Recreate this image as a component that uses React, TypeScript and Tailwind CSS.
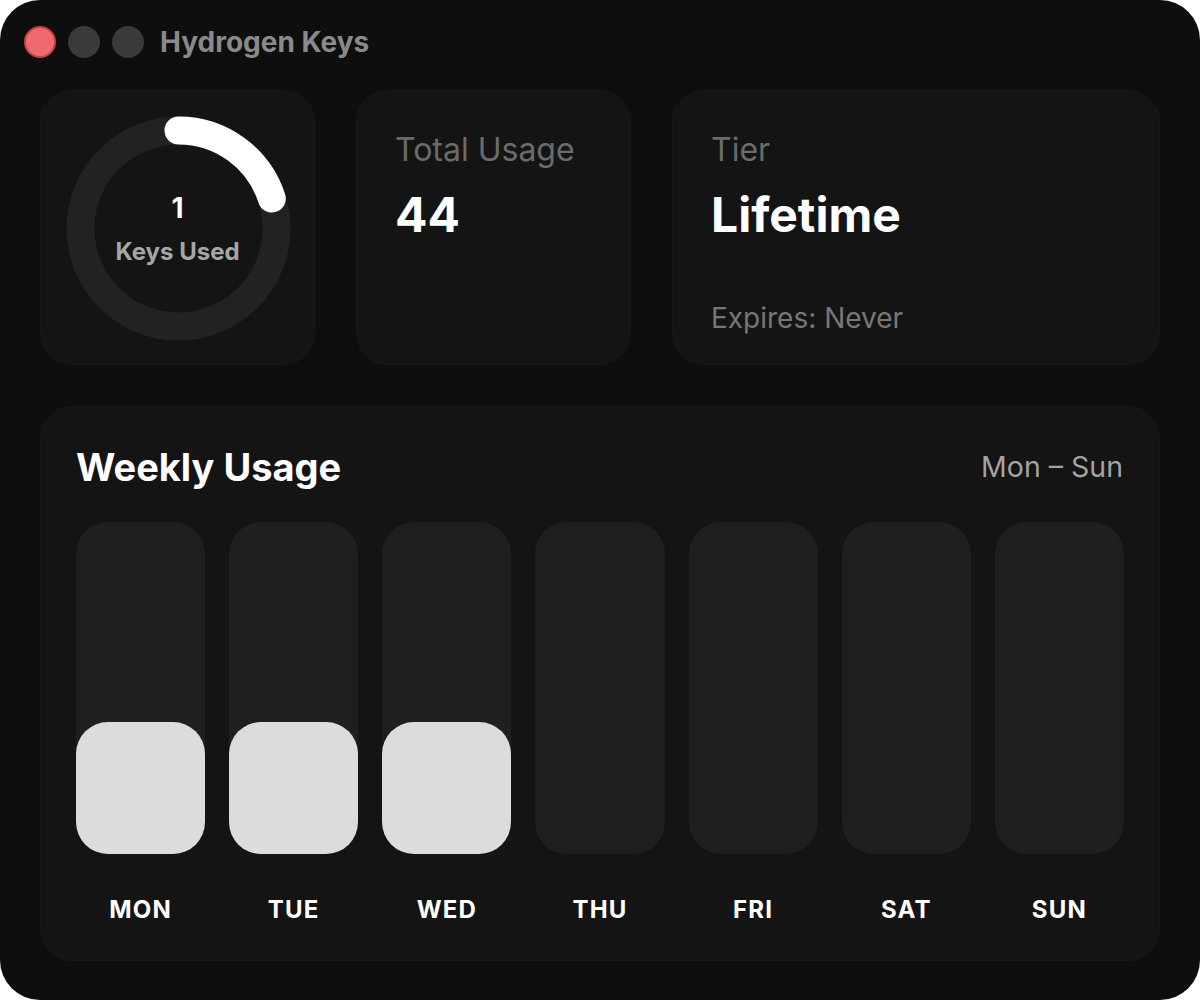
import React from 'react';

const days = [
  { label: 'MON', value: 1 },
  { label: 'TUE', value: 1 },
  { label: 'WED', value: 1 },
  { label: 'THU', value: 0 },
  { label: 'FRI', value: 0 },
  { label: 'SAT', value: 0 },
  { label: 'SUN', value: 0 },
];

const KeysRing = () => {
  const r = 98;
  const c = 2 * Math.PI * r;
  const pct = 0.2;
  return (
    <div className="relative w-[275px] h-[275px] rounded-[32px] bg-[#141414] border border-[#181818] flex items-center justify-center">
      <svg width="275" height="275" viewBox="0 0 275 275" className="absolute inset-0">
        <circle cx="137.5" cy="137.5" r={r} fill="none" stroke="#222222" strokeWidth="28" />
        <circle
          cx="137.5"
          cy="137.5"
          r={r}
          fill="none"
          stroke="#ffffff"
          strokeWidth="28"
          strokeLinecap="round"
          strokeDasharray={`${c * pct} ${c}`}
          transform="rotate(-90 137.5 137.5)"
        />
      </svg>
      <div className="relative flex flex-col items-center mt-[2px]">
        <span className="text-[28px] leading-[34px] font-bold text-white">1</span>
        <span className="mt-[12px] text-[24px] leading-[30px] font-bold text-[#a6a6a6]">Keys Used</span>
      </div>
    </div>
  );
};

export default function App() {
  return (
    <div className="w-[1200px] h-[1000px] bg-white" style={{ fontFamily: 'Inter, "Noto Sans", sans-serif' }}>
      <div className="w-full h-full rounded-[40px] bg-[#0e0e0e] flex flex-col">
        {/* title bar */}
        <div className="h-[84px] flex items-center px-6">
          <div className="flex gap-3">
            <div className="w-8 h-8 rounded-full bg-[#ee6a6e] border-2 border-[#c9403f]" />
            <div className="w-8 h-8 rounded-full bg-[#3a3a3a]" />
            <div className="w-8 h-8 rounded-full bg-[#3a3a3a]" />
          </div>
          <span className="ml-4 text-[28px] font-bold text-[#8a8a8a]">Hydrogen Keys</span>
        </div>

        <div className="px-10 mt-[6px] flex flex-col">
          {/* stats row */}
          <div className="flex gap-[41px] h-[275px]">
            <KeysRing />
            <div className="w-[275px] rounded-[32px] bg-[#141414] border border-[#181818] px-[38px] pt-[40px]">
              <div className="text-[32px] leading-[38px] text-[#6b6b6b]">Total Usage</div>
              <div className="mt-[20px] text-[48px] leading-[52px] font-bold text-white">44</div>
            </div>
            <div className="flex-1 rounded-[32px] bg-[#141414] border border-[#181818] px-[38px] pt-[40px] pb-[30px] flex flex-col">
              <div className="text-[32px] leading-[38px] text-[#6b6b6b]">Tier</div>
              <div className="mt-[20px] text-[48px] leading-[52px] font-bold text-white">Lifetime</div>
              <div className="mt-auto text-[28px] leading-[32px] text-[#777777]">Expires: Never</div>
            </div>
          </div>

          {/* weekly usage */}
          <div className="mt-[41px] h-[555px] rounded-[32px] bg-[#141414] border border-[#181818] px-[35px] pt-[37px] flex flex-col">
            <div className="flex items-center justify-between h-[46px]">
              <span className="text-[38px] leading-[46px] font-bold text-white">Weekly Usage</span>
              <span className="text-[28.5px] leading-[34px] text-[#a3a3a3] mr-[1px]">Mon – Sun</span>
            </div>
            <div className="mt-[32px] grid grid-cols-7 gap-6">
              {days.map((d) => (
                <div key={d.label} className="flex flex-col items-center">
                  <div className="w-full h-[332px] rounded-[32px] bg-[#1f1f1f] flex flex-col justify-end">
                    {d.value > 0 && <div className="w-full h-[132px] rounded-[32px] bg-[#dcdcdc]" />}
                  </div>
                  <span className="mt-[41px] text-[24px] leading-[30px] font-bold tracking-wider text-white">{d.label}</span>
                </div>
              ))}
            </div>
          </div>
        </div>
      </div>
    </div>
  );
}
